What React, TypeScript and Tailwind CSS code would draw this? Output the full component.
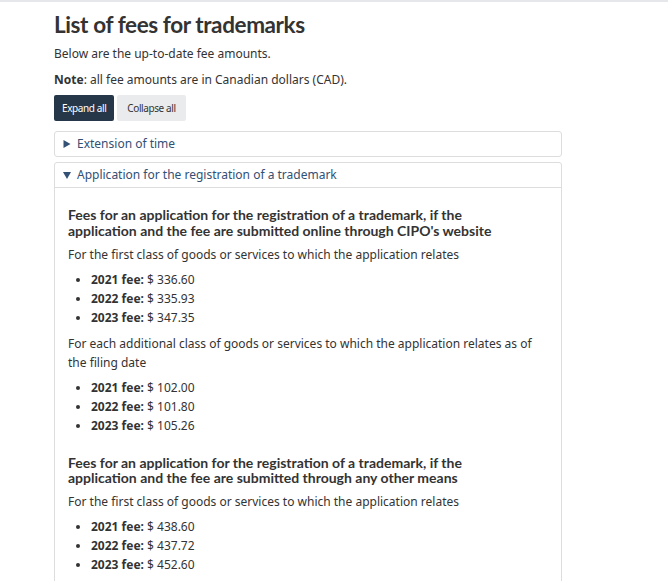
import { useState } from "react";

type Fee = { year: string; amount: string };

const onlineFirst: Fee[] = [
  { year: "2021", amount: "336.60" },
  { year: "2022", amount: "335.93" },
  { year: "2023", amount: "347.35" },
];

const onlineAdditional: Fee[] = [
  { year: "2021", amount: "102.00" },
  { year: "2022", amount: "101.80" },
  { year: "2023", amount: "105.26" },
];

const otherFirst: Fee[] = [
  { year: "2021", amount: "438.60" },
  { year: "2022", amount: "437.72" },
  { year: "2023", amount: "452.60" },
];

function FeeList({ fees }: { fees: Fee[] }) {
  return (
    <ul className="mt-[6px] mb-[7px] list-disc pl-[23px] marker:text-[#333]">
      {fees.map((f) => (
        <li key={f.year} className="leading-[19px]">
          <strong className="font-bold">{f.year} fee:</strong> $ {f.amount}
        </li>
      ))}
    </ul>
  );
}

function Caret({ open }: { open: boolean }) {
  return (
    <svg width="8" height="8" viewBox="0 0 8 8" className="shrink-0 fill-[#335075]">
      {open ? <path d="M0 1h8L4 8z" /> : <path d="M0.5 0L7.5 4L0.5 8z" />}
    </svg>
  );
}

function Panel({
  title,
  open,
  onToggle,
  children,
}: {
  title: string;
  open: boolean;
  onToggle: () => void;
  children?: React.ReactNode;
}) {
  return (
    <div className="mb-[5px] rounded-[3px] border border-[#dddddd] bg-white">
      <button
        type="button"
        onClick={onToggle}
        className={`flex h-[24px] w-full items-center gap-[6px] pl-[8px] text-left text-[12px] text-[#335075] ${
          open ? "border-b border-[#dddddd] h-[25px]" : ""
        }`}
      >
        <Caret open={open} />
        <span>{title}</span>
      </button>
      {open && <div className="px-[13px] pt-[19px] pb-[8px]">{children}</div>}
    </div>
  );
}

export default function App() {
  const [openA, setOpenA] = useState(false);
  const [openB, setOpenB] = useState(true);

  return (
    <div className="min-h-[581px] border-t-2 border-[#e5e7eb] bg-white font-['Noto_Sans',sans-serif] text-[12px] text-[#333333]">
      <div className="w-[508px] ml-[54px] pt-[8px]">
        <h1 className="font-['Lato',sans-serif] text-[22.5px] font-bold tracking-[-0.4px] leading-[30px] text-[#333333]">
          List of fees for trademarks
        </h1>
        <p className="mt-[5px] leading-[18px]">Below are the up-to-date fee amounts.</p>
        <p className="mt-[8px] leading-[18px]">
          <strong className="font-bold">Note</strong>: all fee amounts are in Canadian dollars (CAD).
        </p>
        <div className="mt-[6px] flex gap-[3px]">
          <button
            type="button"
            onClick={() => {
              setOpenA(true);
              setOpenB(true);
            }}
            className="h-[26px] rounded-[2px] bg-[#26374a] px-[8px] text-[10px] tracking-[-0.4px] text-white"
          >
            Expand all
          </button>
          <button
            type="button"
            onClick={() => {
              setOpenA(false);
              setOpenB(false);
            }}
            className="h-[26px] rounded-[2px] bg-[#eaebed] px-[10px] text-[10px] tracking-[-0.4px] text-[#333333]"
          >
            Collapse all
          </button>
        </div>
        <div className="mt-[10px]">
          <Panel title="Extension of time" open={openA} onToggle={() => setOpenA(!openA)}>
            <p className="leading-[19px]">Extension of time fees.</p>
          </Panel>
          <Panel
            title="Application for the registration of a trademark"
            open={openB}
            onToggle={() => setOpenB(!openB)}
          >
            <h2 className="max-w-[440px] font-['Lato',sans-serif] text-[14px] font-bold leading-[16px] text-[#333333]">
              Fees for an application for the registration of a trademark, if the application and the fee are
              submitted online through CIPO's website
            </h2>
            <p className="mt-[6px] leading-[19px]">
              For the first class of goods or services to which the application relates
            </p>
            <FeeList fees={onlineFirst} />
            <p className="leading-[19px]">
              For each additional class of goods or services to which the application relates as of the filing date
            </p>
            <FeeList fees={onlineAdditional} />
            <h2 className="mt-[20px] max-w-[440px] font-['Lato',sans-serif] text-[14px] font-bold leading-[15px] text-[#333333]">
              Fees for an application for the registration of a trademark, if the application and the fee are
              submitted through any other means
            </h2>
            <p className="mt-[7px] leading-[19px]">
              For the first class of goods or services to which the application relates
            </p>
            <FeeList fees={otherFirst} />
          </Panel>
        </div>
      </div>
    </div>
  );
}
